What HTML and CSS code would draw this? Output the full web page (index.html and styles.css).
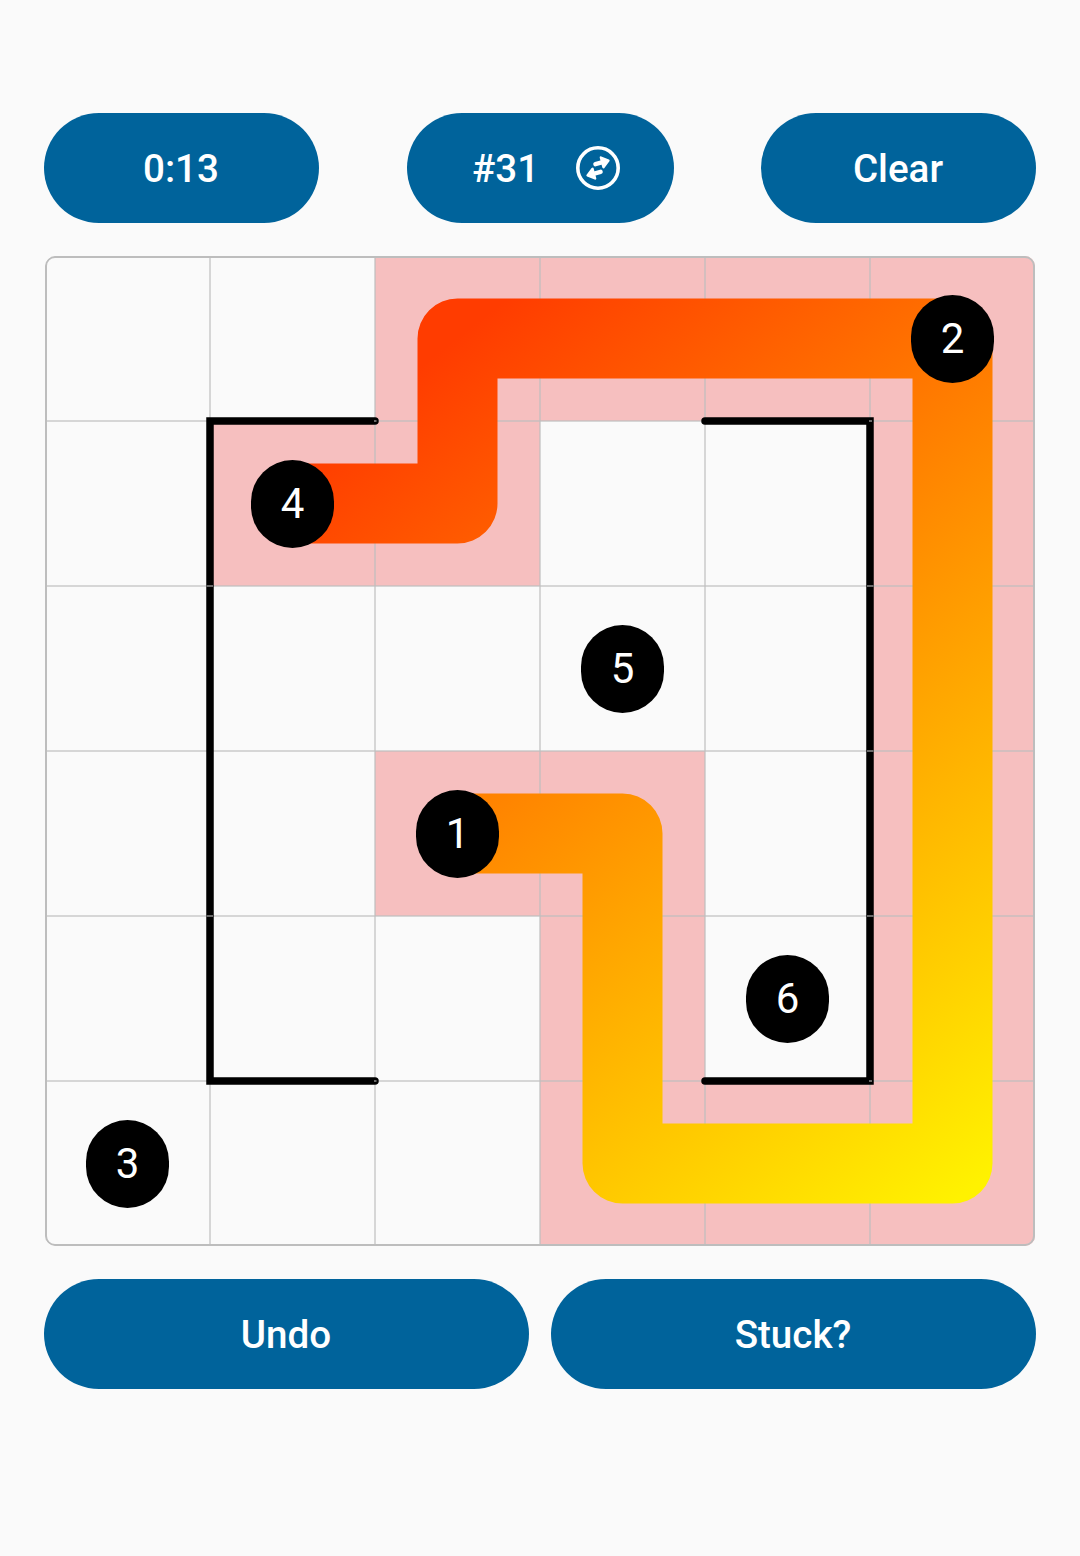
FILE: index.html
```html
<!DOCTYPE html>
<html lang="en">
<head>
    <meta charset="UTF-8">
    <meta name="viewport" content="width=device-width, initial-scale=1.0">
    <title>Zip</title>
    <link rel="stylesheet" href="styles.css">
</head>
<body>
    <div class="top-bar">
        <button class="pill timer">0:13</button>
        <button class="pill level">
            <span>#31</span>
            <svg class="swap-icon" viewBox="0 0 44 44" fill="none" stroke="#fff" stroke-linejoin="round">
                <circle cx="22" cy="22" r="20.2" stroke-width="3.6"/>
                <g transform="rotate(-15 22 22)">
                    <path d="M20.5 17.6H29" stroke-width="4.4" stroke-linecap="round"/>
                    <path d="M27.5 12.6L34 17.6L27.5 22.6Z" fill="#fff" stroke-width="2.4"/>
                    <path d="M23.5 26.4H15" stroke-width="4.4" stroke-linecap="round"/>
                    <path d="M16.5 21.4L10 26.4L16.5 31.4Z" fill="#fff" stroke-width="2.4"/>
                </g>
            </svg>
        </button>
        <button class="pill clear">Clear</button>
    </div>

    <div class="board">
        <div class="cell"></div>
        <div class="cell"></div>
        <div class="cell on"></div>
        <div class="cell on"></div>
        <div class="cell on"></div>
        <div class="cell on"><span class="node">2</span></div>

        <div class="cell"></div>
        <div class="cell on"><span class="node">4</span></div>
        <div class="cell on"></div>
        <div class="cell"></div>
        <div class="cell"></div>
        <div class="cell on"></div>

        <div class="cell"></div>
        <div class="cell"></div>
        <div class="cell"></div>
        <div class="cell"><span class="node">5</span></div>
        <div class="cell"></div>
        <div class="cell on"></div>

        <div class="cell"></div>
        <div class="cell"></div>
        <div class="cell on"><span class="node">1</span></div>
        <div class="cell on"></div>
        <div class="cell"></div>
        <div class="cell on"></div>

        <div class="cell"></div>
        <div class="cell"></div>
        <div class="cell"></div>
        <div class="cell on"></div>
        <div class="cell"><span class="node">6</span></div>
        <div class="cell on"></div>

        <div class="cell"><span class="node">3</span></div>
        <div class="cell"></div>
        <div class="cell"></div>
        <div class="cell on"></div>
        <div class="cell on"></div>
        <div class="cell on"></div>

        <!-- path and walls, in board pixels -->
        <svg class="overlay" viewBox="0 0 990 990" fill="none">
            <defs>
                <linearGradient id="trail" gradientUnits="userSpaceOnUse" x1="412" y1="82" x2="1020" y2="860">
                    <stop offset="0" stop-color="#ff3c00"/>
                    <stop offset="1" stop-color="#fff200"/>
                </linearGradient>
            </defs>
            <path d="M412 577.5H577.5V907.5H907.5V82.5H412.5V247.5H247.5" stroke="url(#trail)" stroke-width="80" stroke-linejoin="round"/>
            <path class="wall" d="M330 165H165V825H330"/>
            <path class="wall" d="M660 165H825V825H660"/>
            <path class="tick" d="M161.5 330H168M161.5 660H168M822 330H828.5M822 495H828.5M822 660H828.5M329 165H331.5M329 825H331.5M824 165H827M824 825H827"/>
        </svg>
    </div>

    <div class="bottom-bar">
        <button class="pill">Undo</button>
        <button class="pill">Stuck?</button>
    </div>
</body>
</html>
```

FILE: styles.css
```css
* {
    box-sizing: border-box;
}
body {
    margin: 0;
    height: 1556px;
    padding: 113px 44px 0;
    background-color: #fafafa;
    font-family: Roboto, sans-serif;
    overflow: hidden;
}
.pill {
    height: 110px;
    border: none;
    border-radius: 55px;
    background-color: #00639b;
    color: #fff;
    font-family: Roboto, sans-serif;
    font-size: 38.6px;
    font-weight: 500;
    padding: 1px 1px 0 0;
}
.top-bar {
    display: flex;
    justify-content: space-between;
    margin-bottom: 33px;
}
.timer, .clear {
    width: 275px;
}
.level {
    width: 267px;
    display: flex;
    align-items: center;
    justify-content: center;
    gap: 37px;
    padding: 0 0 0 12px;
}
.level span {
    padding-top: 1px;
}
.swap-icon {
    width: 44px;
    height: 44px;
}
.board {
    position: relative;
    width: 990px;
    height: 990px;
    margin-left: 1px;
    display: grid;
    grid-template-columns: repeat(6, 165px);
    grid-template-rows: repeat(6, 165px);
    border-radius: 10px;
    overflow: hidden;
}
/* grid lines */
.board::before {
    content: "";
    position: absolute;
    inset: 0;
    z-index: 1;
    background-image:
        linear-gradient(to right, rgba(190, 190, 190, 0.6) 2px, transparent 2px),
        linear-gradient(to bottom, rgba(190, 190, 190, 0.6) 2px, transparent 2px);
    background-size: 165px 165px;
    background-position: -1px -1px;
}
/* outer frame */
.board::after {
    content: "";
    position: absolute;
    inset: 0;
    z-index: 4;
    border: 2px solid #bdbdbd;
    border-radius: 10px;
    pointer-events: none;
}
.cell {
    display: flex;
    align-items: center;
    justify-content: center;
}
.cell.on {
    background-color: #f6bfbf;
}
.overlay {
    position: absolute;
    inset: 0;
    z-index: 2;
    width: 990px;
    height: 990px;
}
.wall {
    stroke: #000;
    stroke-width: 7.5;
    stroke-linecap: round;
}
.tick {
    stroke: #8a8a8a;
    stroke-width: 1.5;
}
.node {
    position: relative;
    z-index: 3;
    width: 83px;
    height: 88px;
    border-radius: 41.5px;
    background-color: #000;
    color: #fff;
    font-size: 42px;
    display: flex;
    align-items: center;
    justify-content: center;
}
.bottom-bar {
    display: flex;
    justify-content: space-between;
    margin-top: 33px;
}
.bottom-bar .pill {
    width: 485px;
}
```
